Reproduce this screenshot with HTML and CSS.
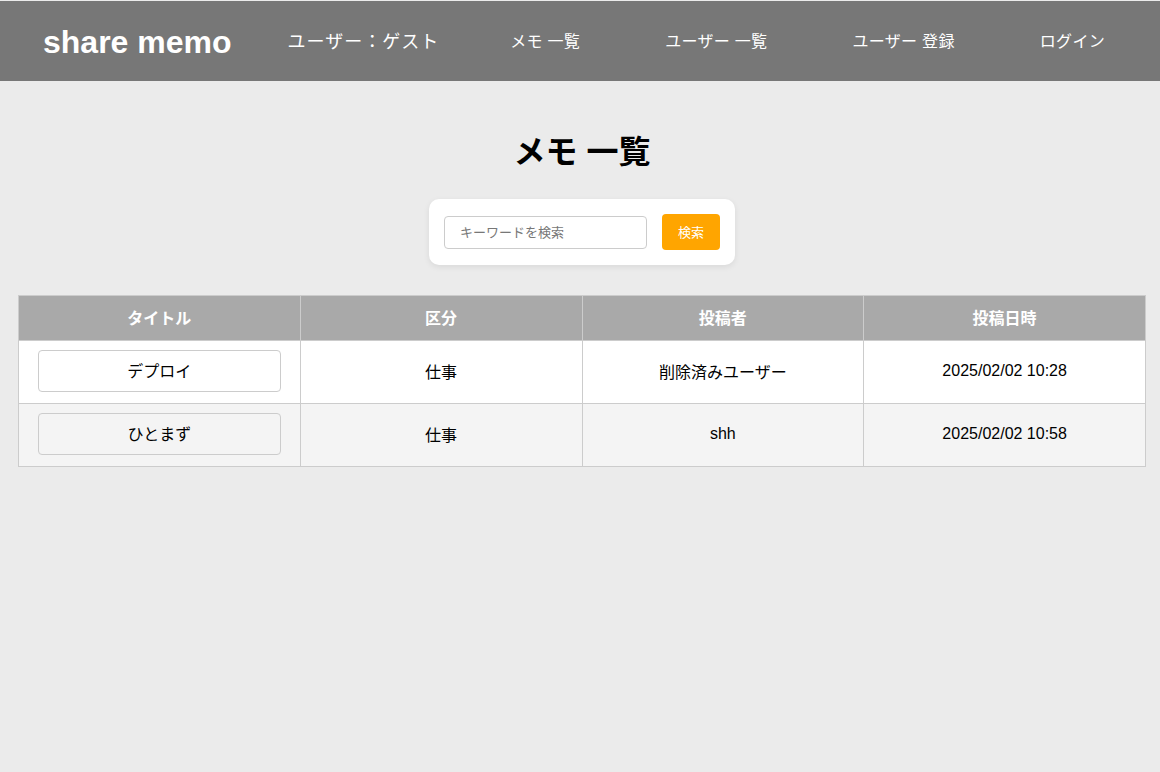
FILE: index.html
```html
<!DOCTYPE html>
<html lang="ja">
<head>
<meta charset="utf-8">
<title>share memo</title>
<link rel="stylesheet" href="styles.css">
</head>
<body>
<header class="site-header">
  <div class="logo">share memo</div>
  <nav class="nav">
    <span class="nav-user">ユーザー：ゲスト</span>
    <div class="nav-links">
      <a class="nav-link" href="#">メモ 一覧</a>
      <a class="nav-link" href="#">ユーザー 一覧</a>
      <a class="nav-link" href="#">ユーザー 登録</a>
      <a class="nav-link" href="#">ログイン</a>
    </div>
  </nav>
</header>
<main class="main">
  <h1 class="page-title">メモ 一覧</h1>
  <form class="search-card">
    <input class="search-input" type="text" placeholder="キーワードを検索">
    <button class="search-btn" type="button">検索</button>
  </form>
  <table class="memo-table">
    <thead>
      <tr>
        <th>タイトル</th>
        <th>区分</th>
        <th>投稿者</th>
        <th>投稿日時</th>
      </tr>
    </thead>
    <tbody>
      <tr>
        <td><button class="title-btn" type="button">デプロイ</button></td>
        <td>仕事</td>
        <td>削除済みユーザー</td>
        <td>2025/02/02 10:28</td>
      </tr>
      <tr class="alt">
        <td><button class="title-btn" type="button">ひとまず</button></td>
        <td>仕事</td>
        <td>shh</td>
        <td>2025/02/02 10:58</td>
      </tr>
    </tbody>
  </table>
</main>
</body>
</html>
```
FILE: styles.css
```css
html, body {
  margin: 0;
  padding: 0;
}
body {
  background: #ebebeb;
  font-family: "Liberation Sans", Arial, "Noto Sans CJK JP", sans-serif;
  color: #000;
  padding-top: 1px;
  min-height: 771px;
}
.site-header {
  height: 80px;
  background: #777777;
  display: flex;
  align-items: center;
  padding: 0 55px 0 43px;
  color: #fff;
}
.logo {
  font-size: 32px;
  font-weight: bold;
  margin-right: 56px;
  line-height: 36px;
  margin-top: 2px;
}
.nav {
  flex: 1;
  display: flex;
  align-items: center;
  margin-top: -2px;
}
.nav-user {
  font-size: 18px;
  letter-spacing: 1px;
  margin-right: 71px;
}
.nav-links {
  flex: 1;
  display: flex;
  align-items: center;
  justify-content: space-between;
}
.nav-link {
  color: #fff;
  text-decoration: none;
  font-size: 16px;
  letter-spacing: 0.3px;
}
.main {
  padding: 0 14px 0 18px;
}
.page-title {
  text-align: center;
  font-size: 32px;
  font-weight: bold;
  margin: 51px 0 27px;
  line-height: 40px;
}
.search-card {
  width: 306px;
  height: 66px;
  box-sizing: border-box;
  margin: 0 auto 30px;
  background: #fff;
  border-radius: 10px;
  box-shadow: 0 2px 6px rgba(0, 0, 0, 0.08);
  display: flex;
  align-items: center;
  padding: 0 15px;
  gap: 15px;
}
.search-input {
  width: 203px;
  height: 33px;
  box-sizing: border-box;
  border: 1px solid #cccccc;
  border-radius: 4px;
  padding: 0 15px;
  font-size: 13px;
  font-family: inherit;
  color: #333;
}
.search-input::placeholder {
  color: #777;
}
.search-btn {
  width: 58px;
  height: 36px;
  background: #ffa500;
  color: #fff;
  border: none;
  border-radius: 4px;
  font-size: 13px;
  font-family: inherit;
  padding: 0 0 2px;
}
.memo-table {
  width: 1128px;
  border-collapse: collapse;
  table-layout: fixed;
  background: #fff;
}
.memo-table th,
.memo-table td {
  border: 1px solid #cccccc;
  text-align: center;
  font-size: 16px;
}
.memo-table th {
  background: #a9a9a9;
  color: #fff;
  font-weight: bold;
  height: 45px;
  padding: 0 10px 3px;
  box-sizing: border-box;
}
.memo-table td {
  height: 63px;
  padding: 0 19px 2px;
  box-sizing: border-box;
}
.memo-table tr.alt td {
  background: #f4f4f4;
}
.title-btn {
  width: 100%;
  height: 42px;
  background: transparent;
  border: 1px solid #cccccc;
  border-radius: 4px;
  font-size: 16px;
  font-family: inherit;
  color: #000;
  padding: 0 0 3px;
  display: block;
}
```
